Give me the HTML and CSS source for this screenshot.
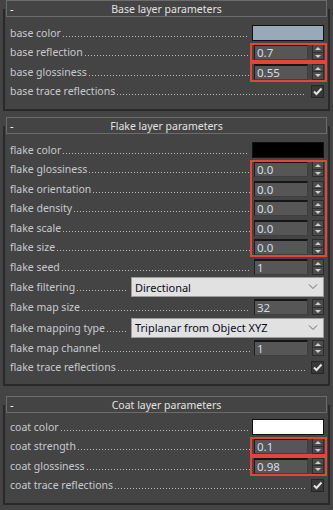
FILE: index.html
```html
<!doctype html>
<html>
<head>
<meta charset="utf-8">
<meta name="viewport" content="width=device-width, initial-scale=1">
<link rel="stylesheet" href="styles.css">
</head>
<body>
<div class="rollout rollout--base">
    <div class="rollout__head"><span class="rollout__toggle">-</span><span class="rollout__title">Base layer parameters</span></div>
    <div class="rollout__body">
        <div class="param"><span class="param__label">base color</span><span class="param__dots"></span><span class="swatch swatch--base"></span></div>
        <div class="hl">
            <div class="param"><span class="param__label">base reflection</span><span class="param__dots"></span>
                <div class="spinner"><span class="spinner__field">0.7</span><span class="spinner__btns"><i class="spinner__up"></i><i class="spinner__down"></i></span></div></div>
        </div>
        <div class="hl">
            <div class="param"><span class="param__label">base glossiness</span><span class="param__dots"></span>
                <div class="spinner"><span class="spinner__field">0.55</span><span class="spinner__btns"><i class="spinner__up"></i><i class="spinner__down"></i></span></div></div>
        </div>
        <div class="param"><span class="param__label">base trace reflections</span><span class="param__dots param__dots--long"></span>
            <span class="check"><svg width="11" height="11" viewBox="0 0 11 11"><path d="M2 5.5 L4.5 8 L9.5 2.5"/></svg></span></div>
    </div>
</div>

<div class="rollout rollout--flake">
    <div class="rollout__head"><span class="rollout__toggle">-</span><span class="rollout__title">Flake layer parameters</span></div>
    <div class="rollout__body">
        <div class="param"><span class="param__label">flake color</span><span class="param__dots"></span><span class="swatch swatch--flake"></span></div>
        <div class="hl">
            <div class="param"><span class="param__label">flake glossiness</span><span class="param__dots"></span>
                <div class="spinner"><span class="spinner__field">0.0</span><span class="spinner__btns"><i class="spinner__up"></i><i class="spinner__down"></i></span></div></div>
            <div class="param"><span class="param__label">flake orientation</span><span class="param__dots"></span>
                <div class="spinner"><span class="spinner__field">0.0</span><span class="spinner__btns"><i class="spinner__up"></i><i class="spinner__down"></i></span></div></div>
            <div class="param"><span class="param__label">flake density</span><span class="param__dots"></span>
                <div class="spinner"><span class="spinner__field">0.0</span><span class="spinner__btns"><i class="spinner__up"></i><i class="spinner__down"></i></span></div></div>
            <div class="param"><span class="param__label">flake scale</span><span class="param__dots"></span>
                <div class="spinner"><span class="spinner__field">0.0</span><span class="spinner__btns"><i class="spinner__up"></i><i class="spinner__down"></i></span></div></div>
            <div class="param"><span class="param__label">flake size</span><span class="param__dots"></span>
                <div class="spinner"><span class="spinner__field">0.0</span><span class="spinner__btns"><i class="spinner__up"></i><i class="spinner__down"></i></span></div></div>
        </div>
        <div class="param"><span class="param__label">flake seed</span><span class="param__dots"></span>
            <div class="spinner"><span class="spinner__field">1</span><span class="spinner__btns"><i class="spinner__up"></i><i class="spinner__down"></i></span></div></div>
        <div class="param param--select"><span class="param__label">flake filtering</span><span class="param__dots"></span>
            <div class="select"><span class="select__value">Directional</span><svg class="select__arrow" width="10" height="6" viewBox="0 0 10 6"><path d="M1 0.5 L5 4.5 L9 0.5"/></svg></div></div>
        <div class="param"><span class="param__label">flake map size</span><span class="param__dots"></span>
            <div class="spinner"><span class="spinner__field">32</span><span class="spinner__btns"><i class="spinner__up"></i><i class="spinner__down"></i></span></div></div>
        <div class="param param--select"><span class="param__label">flake mapping type</span><span class="param__dots"></span>
            <div class="select"><span class="select__value">Triplanar from Object XYZ</span><svg class="select__arrow" width="10" height="6" viewBox="0 0 10 6"><path d="M1 0.5 L5 4.5 L9 0.5"/></svg></div></div>
        <div class="param"><span class="param__label">flake map channel</span><span class="param__dots"></span>
            <div class="spinner"><span class="spinner__field">1</span><span class="spinner__btns"><i class="spinner__up"></i><i class="spinner__down"></i></span></div></div>
        <div class="param"><span class="param__label">flake trace reflections</span><span class="param__dots param__dots--long"></span>
            <span class="check"><svg width="11" height="11" viewBox="0 0 11 11"><path d="M2 5.5 L4.5 8 L9.5 2.5"/></svg></span></div>
    </div>
</div>

<div class="rollout rollout--coat">
    <div class="rollout__head"><span class="rollout__toggle">-</span><span class="rollout__title">Coat layer parameters</span></div>
    <div class="rollout__body">
        <div class="param"><span class="param__label">coat color</span><span class="param__dots"></span><span class="swatch swatch--coat"></span></div>
        <div class="hl">
            <div class="param"><span class="param__label">coat strength</span><span class="param__dots"></span>
                <div class="spinner"><span class="spinner__field">0.1</span><span class="spinner__btns"><i class="spinner__up"></i><i class="spinner__down"></i></span></div></div>
        </div>
        <div class="hl">
            <div class="param"><span class="param__label">coat glossiness</span><span class="param__dots"></span>
                <div class="spinner"><span class="spinner__field">0.98</span><span class="spinner__btns"><i class="spinner__up"></i><i class="spinner__down"></i></span></div></div>
        </div>
        <div class="param"><span class="param__label">coat trace reflections</span><span class="param__dots param__dots--long"></span>
            <span class="check"><svg width="11" height="11" viewBox="0 0 11 11"><path d="M2 5.5 L4.5 8 L9.5 2.5"/></svg></span></div>
    </div>
</div>
</body>
</html>
```

FILE: styles.css
```css
body {
    margin: 0;
    background-color: #444;
    color: #c7cacd;
    font-family: "Noto Sans", "Open Sans", sans-serif;
    font-size: 10.5px;
    overflow: hidden;
}

.rollout {
    margin-bottom: 6px;
}
.rollout--coat {
    margin-top: 10px;
}
.rollout__head {
    display: grid;
    grid-template-columns: 1fr auto 1fr;
    align-items: center;
    height: 17px;
    box-sizing: border-box;
    margin: 0 6px;
    border: 1px solid #6b6b6b;
    color: #e2e2e2;
    position: relative;
    z-index: 1;
}
.rollout__toggle {
    padding-left: 3px;
    font-size: 11px;
    color: #fff;
}
.rollout__title {
    white-space: nowrap;
}
.rollout__body {
    margin: -8px 3px 0;
    padding: 14px 0 8px;
    border: 2px solid #292929;
    border-top: 0;
}
.rollout--flake .rollout__body {
    padding-bottom: 7px;
}
.rollout--coat .rollout__body {
    padding-top: 12px;
    padding-bottom: 8px;
}

.param {
    display: flex;
    align-items: center;
    height: 19.5px;
    padding: 0 4px 0 5px;
}
.param--select {
    height: 21px;
}
.param__label {
    white-space: nowrap;
}
.param__dots {
    flex: 1;
    height: 1px;
    margin: 7px 4px 0 2px;
    background-image: linear-gradient(to right, #b9bcbf 1px, transparent 1px);
    background-size: 3px 1px;
}
.param__dots--long {
    margin-right: 6px;
}

.hl {
    position: relative;
}
.hl::after {
    content: '';
    position: absolute;
    top: 0;
    bottom: 0;
    right: 1px;
    width: 77px;
    border: 2px solid #e4443b;
    box-sizing: border-box;
}

.swatch {
    width: 72px;
    height: 16px;
    box-sizing: border-box;
    border: 1px solid #111;
}
.swatch--base {
    background-color: #9aa9ba;
}
.swatch--flake {
    background-color: #000;
}
.swatch--coat {
    background-color: #fff;
}

.spinner {
    display: flex;
    gap: 4px;
    height: 16px;
}
.spinner__field {
    width: 54px;
    box-sizing: border-box;
    padding: 0 2px;
    border-top: 2px solid #161616;
    border-left: 1px solid #1f1f1f;
    border-right: 1px solid #3f3f3f;
    border-bottom: 1px solid #3f3f3f;
    background-color: #565656;
    color: #d5dde6;
    font-size: 11.5px;
    line-height: 13px;
}
.spinner__btns {
    width: 12px;
    box-sizing: border-box;
    display: flex;
    flex-direction: column;
    border: 1px solid #2c2c2c;
    background-color: #4c4c4c;
}
.spinner__up,
.spinner__down {
    flex: 1;
    display: flex;
    align-items: center;
    justify-content: center;
}
.spinner__down {
    border-top: 1px solid #2f2f2f;
}
.spinner__up::before,
.spinner__down::before {
    content: '';
    border-left: 3px solid transparent;
    border-right: 3px solid transparent;
}
.spinner__up::before {
    border-bottom: 3px solid #cfcfcf;
}
.spinner__down::before {
    border-top: 3px solid #cfcfcf;
}

.check {
    width: 13px;
    height: 13px;
    box-sizing: border-box;
    display: flex;
    align-items: center;
    justify-content: center;
    border: 1px solid #262626;
    background-color: #383838;
}
.check path {
    fill: none;
    stroke: #e4e4e4;
    stroke-width: 2;
}

.select {
    width: 193px;
    height: 20px;
    box-sizing: border-box;
    display: flex;
    align-items: center;
    justify-content: space-between;
    padding: 0 5px 0 3px;
    border: 1px solid #9c9c9c;
    background-color: #e1e1e1;
    color: #0a0a1e;
    font-size: 11px;
}
.select__arrow path {
    fill: none;
    stroke: #6a6a6a;
    stroke-width: 1;
}
```
